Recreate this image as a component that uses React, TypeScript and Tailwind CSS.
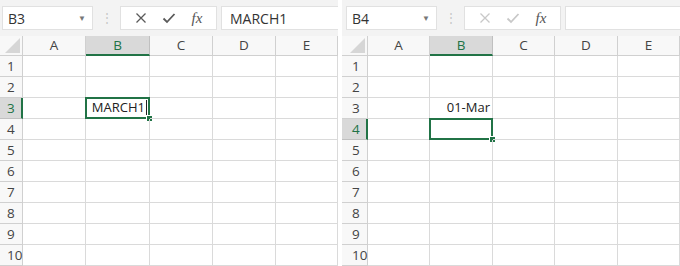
import React from "react";

type PanelProps = {
  name: string;
  formula: string;
  activeRow: number;
  cols: number[];
  rowHeaderW: number;
  numPad: string;
  padLeft: string;
  editing: boolean;
};

function CancelIcon({ dim }: { dim: boolean }) {
  return (
    <svg width="12" height="12" viewBox="0 0 12 12">
      <path
        d="M1.5 1.5 L10.5 10.5 M10.5 1.5 L1.5 10.5"
        stroke={dim ? "#c8c8c8" : "#5a5a5a"}
        strokeWidth="1.3"
        fill="none"
      />
    </svg>
  );
}

function CheckIcon({ dim }: { dim: boolean }) {
  return (
    <svg width="14" height="12" viewBox="0 0 14 12">
      <path
        d="M1.5 6.5 L5 10 L12.5 2"
        stroke={dim ? "#c8c8c8" : "#5a5a5a"}
        strokeWidth="1.8"
        fill="none"
      />
    </svg>
  );
}

function Toolbar({ name, formula, padLeft, editing }: PanelProps) {
  return (
    <div className={`flex h-[39px] items-start bg-[#f3f3f3] pt-[6px] ${padLeft}`}>
      {/* Name box */}
      <div className="flex h-[24px] w-[91px] items-center justify-between border border-[#e1e1e1] bg-white pl-[5px] pr-[6px]">
        <span className="text-[14px] text-[#333]">{name}</span>
        <span className="text-[8px] text-[#777]">▼</span>
      </div>
      <div className="flex h-[24px] w-[27px] items-center justify-center text-[12px] text-[#c6c6c6]">
        ⋮
      </div>
      {/* Cancel / enter / fx */}
      <div className="flex h-[24px] w-[97px] items-center justify-around border border-[#e1e1e1] bg-white px-[6px]">
        <CancelIcon dim={!editing} />
        <CheckIcon dim={!editing} />
        <span className="font-['Liberation_Serif',serif] text-[15px] italic text-[#555]">
          fx
        </span>
      </div>
      {/* Formula input */}
      <div className="ml-[4px] flex h-[24px] flex-1 items-center border border-[#e1e1e1] border-r-0 bg-white pl-[8px]">
        <span className="text-[14px] text-[#333]">{formula}</span>
      </div>
    </div>
  );
}

function Panel(props: PanelProps) {
  const { activeRow, cols, rowHeaderW, numPad, editing } = props;
  const letters = ["A", "B", "C", "D", "E"];
  const rows = [1, 2, 3, 4, 5, 6, 7, 8, 9, 10];

  return (
    <div className="flex w-[338px] flex-col overflow-hidden">
      <Toolbar {...props} />

      {/* Column headers */}
      <div className="flex h-[20px] bg-[#f8f8f8]">
        <div
          className="relative shrink-0 border-r border-b border-[#d0d0d0]"
          style={{ width: rowHeaderW }}
        >
          <svg className="absolute right-[2px] bottom-[2px]" width="15" height="15" viewBox="0 0 15 15">
            <path d="M15 0 L15 15 L0 15 Z" fill="#d6d6d6" />
          </svg>
        </div>
        {letters.map((l, i) => {
          const sel = l === "B";
          return (
            <div
              key={l}
              className={`flex shrink-0 items-center justify-center text-[13.5px] ${
                sel
                  ? "border-r border-b-2 border-r-[#c0c0c0] border-b-[#217346] bg-[#d9d9d9] text-[#217346]"
                  : "border-r border-b border-[#d0d0d0] text-[#444]"
              } ${i === 4 ? "flex-1" : ""}`}
              style={i === 4 ? undefined : { width: cols[i] }}
            >
              {l}
            </div>
          );
        })}
      </div>

      {/* Rows */}
      {rows.map((r) => {
        const sel = r === activeRow;
        return (
          <div key={r} className="flex h-[21px] bg-white">
            <div
              className={`flex shrink-0 items-center text-[13.5px] ${numPad} ${
                sel
                  ? "border-r-2 border-b border-r-[#217346] border-b-[#c0c0c0] bg-[#d9d9d9] text-[#217346]"
                  : "border-r border-b border-[#d0d0d0] bg-[#f8f8f8] text-[#444]"
              }`}
              style={{ width: rowHeaderW }}
            >
              {r}
            </div>
            {letters.map((l, i) => {
              const active = l === "B" && r === activeRow;
              const dateCell = !editing && l === "B" && r === 3;
              const editCell = editing && active;
              return (
                <div
                  key={l}
                  className={`relative flex shrink-0 items-center justify-end border-r border-b border-[#dadada] pr-[2px] text-[13px] text-[#222] ${
                    i === 4 ? "flex-1" : ""
                  }`}
                  style={i === 4 ? undefined : { width: cols[i] }}
                >
                  {dateCell && <span>01-Mar</span>}
                  {editCell && (
                    <span className="flex items-center">
                      MARCH1
                      <span className="ml-[1px] inline-block h-[16px] w-px bg-[#222]" />
                    </span>
                  )}
                  {active && (
                    <div className="absolute -top-px -left-px right-[-1px] bottom-[-1px] border-2 border-[#217346]">
                      <div className="absolute right-[-5px] bottom-[-5px] h-[7px] w-[7px] border border-white bg-[#217346]" />
                    </div>
                  )}
                </div>
              );
            })}
          </div>
        );
      })}
    </div>
  );
}

export default function App() {
  return (
    <div
      className="flex h-[266px] w-[680px] gap-[4px] overflow-hidden bg-white"
      style={{ fontFamily: "'Open Sans', 'Noto Sans', sans-serif" }}
    >
      <Panel
        name="B3"
        formula="MARCH1"
        activeRow={3}
        cols={[63, 64, 63, 63, 61]}
        rowHeaderW={23}
        numPad="pl-[7px]"
        padLeft="pl-[2px]"
        editing
      />
      <Panel
        name="B4"
        formula=""
        activeRow={4}
        cols={[62, 63, 62, 63, 62]}
        rowHeaderW={26}
        numPad="pl-[10px]"
        padLeft="pl-[4px]"
        editing={false}
      />
    </div>
  );
}
